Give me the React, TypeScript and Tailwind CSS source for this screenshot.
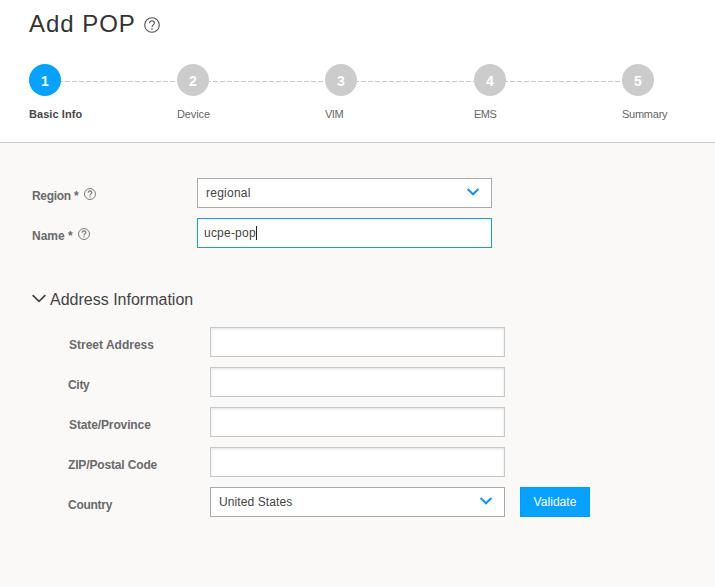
import React from "react";

function Help({ size, bold, className = "" }: { size: number; bold?: boolean; className?: string }) {
  return (
    <svg width={size} height={size} viewBox="0 0 16 16" fill="none" stroke="currentColor" className={"shrink-0 " + className}>
      <circle cx="8" cy="8" r="7.3" strokeWidth={bold ? 1.3 : 1.1} />
      <path d="M5.6 6.3C5.6 4.7 6.6 3.8 8 3.8s2.4.9 2.4 2.2c0 1.8-2.4 1.9-2.4 4" strokeWidth={bold ? 1.7 : 1.1} />
      <path d="M8 11.2v1.6" strokeWidth={bold ? 1.8 : 1.3} />
    </svg>
  );
}

function Chevron() {
  return (
    <svg width="12" height="8" viewBox="0 0 12 8" fill="none" stroke="#1492f5" strokeWidth="2" className="mb-[2px] shrink-0">
      <path d="M0.6 0.9L6 6.3L11.4 0.9" />
    </svg>
  );
}

const steps = [
  { label: "Basic Info", width: "w-[148px]", text: "font-bold text-[#464646] tracking-[0.06px]" },
  { label: "Device", width: "w-[148px]", text: "text-[#666666] tracking-[-0.1px]" },
  { label: "VIM", width: "w-[149px]", text: "text-[#666666] tracking-[-0.5px]" },
  { label: "EMS", width: "w-[148px]", text: "text-[#666666] tracking-[-0.5px]" },
  { label: "Summary", width: "w-[60px]", text: "text-[#666666] tracking-[-0.25px]" },
];

function Steps() {
  return (
    <ol className="mt-[24px] ml-[29px] flex">
      {steps.map((s, i) => (
        <li key={s.label} className={"shrink-0 " + s.width}>
          <div className="flex items-center">
            <div
              className={
                "flex h-8 w-8 shrink-0 items-center justify-center rounded-full pt-[2px] text-[14px] font-bold text-white " +
                (i === 0 ? "bg-[#07a2ff]" : "bg-[#cccccc]")
              }
            >
              {i + 1}
            </div>
            {i < 4 && (
              <div className="mt-[2px] h-px flex-1 bg-[repeating-linear-gradient(90deg,#c8c8c8_0px,#c8c8c8_2px,transparent_2px,transparent_4px,#c8c8c8_4px,#c8c8c8_7px)]" />
            )}
          </div>
          <div className={"mt-[11px] text-[11px] leading-[14px] whitespace-nowrap " + s.text}>{s.label}</div>
        </li>
      ))}
    </ol>
  );
}

const labelText = "text-[12px] leading-[14px] font-bold text-[#6a6a6a] whitespace-nowrap";

function AddressField({ label, tracking, children }: { label: string; tracking: string; children?: React.ReactNode }) {
  return (
    <div className="flex h-[30px]">
      <label className={"w-[142px] shrink-0 pt-[11px] " + labelText + " " + tracking}>{label}</label>
      {children ?? (
        <div className="h-[30px] w-[295px] border border-[#c8c8c8] bg-white shadow-[inset_0_1px_3px_rgba(0,0,0,0.12)]" />
      )}
    </div>
  );
}

export default function App() {
  return (
    <div className="h-[587px] w-[715px] overflow-hidden bg-[#faf9f7] font-['Liberation_Sans',Arial,sans-serif]">
      <header className="h-[143px] border-b border-[#c8c8c8] bg-white">
        <div className="flex h-[40px] items-start pl-[29px]">
          <h1 className="mt-[10px] text-[24px] leading-[28px] tracking-[0.95px] whitespace-nowrap text-[#333333]">Add POP</h1>
          <Help size={16} className="mt-[17px] ml-[8px] text-[#505050]" />
        </div>
        <Steps />
      </header>

      <main className="pt-[35px]">
        <div className="flex h-[30px] pl-8">
          <div className={"flex w-[165px] items-start pt-[11px] " + labelText}>
            <span className="tracking-[-0.3px]">Region *</span>
            <Help size={12} bold className="-mt-px ml-[6px] text-[#777777]" />
          </div>
          <div className="flex h-[30px] w-[295px] items-center justify-between border border-[#aaaaaa] bg-white pr-[12px] pl-[8px] text-[12px] tracking-[0.25px] text-[#444444]">
            <span>regional</span>
            <Chevron />
          </div>
        </div>
        <div className="mt-[10px] flex h-[30px] pl-8">
          <div className={"flex w-[165px] items-start pt-[11px] " + labelText}>
            <span>Name *</span>
            <Help size={12} bold className="-mt-px ml-[5px] text-[#777777]" />
          </div>
          <div className="flex h-[30px] w-[295px] items-center border border-[#169be9] bg-white pl-[6px] text-[12px] text-[#444444]">
            <span className="tracking-[0.22px]">ucpe-pop</span>
            <span className="h-[14px] w-px bg-[#222222]" />
          </div>
        </div>

        <div className="mt-[41px] flex h-[20px] items-start pl-8 text-[#444444]">
          <svg width="14" height="9" viewBox="0 0 14 9" fill="none" stroke="currentColor" strokeWidth="1.8" className="mt-[5px]">
            <path d="M0.6 1.2L7 7.3L13.4 1.2" />
          </svg>
          <h2 className="mt-px ml-[4px] text-[16px] leading-[20px] whitespace-nowrap">Address Information</h2>
        </div>

        <div className="mt-[18px] flex flex-col gap-[10px] pl-[68px]">
          <AddressField label="Street Address" tracking="pl-px tracking-normal" />
          <AddressField label="City" tracking="tracking-[-0.3px]" />
          <AddressField label="State/Province" tracking="pl-px tracking-[-0.12px]" />
          <AddressField label="ZIP/Postal Code" tracking="tracking-[-0.15px]" />
          <AddressField label="Country" tracking="tracking-[-0.28px]">
            <div className="flex h-[30px] w-[295px] items-center justify-between border border-[#aaaaaa] bg-white pr-[12px] pl-[8px] text-[12px] text-[#444444]">
              <span className="tracking-[0.1px]">United States</span>
              <Chevron />
            </div>
            <button className="ml-[15px] h-[30px] w-[70px] border border-[#0c98ec] bg-[#07a2ff] text-[12px] tracking-[0.05px] text-white">
              Validate
            </button>
          </AddressField>
        </div>
      </main>
    </div>
  );
}
